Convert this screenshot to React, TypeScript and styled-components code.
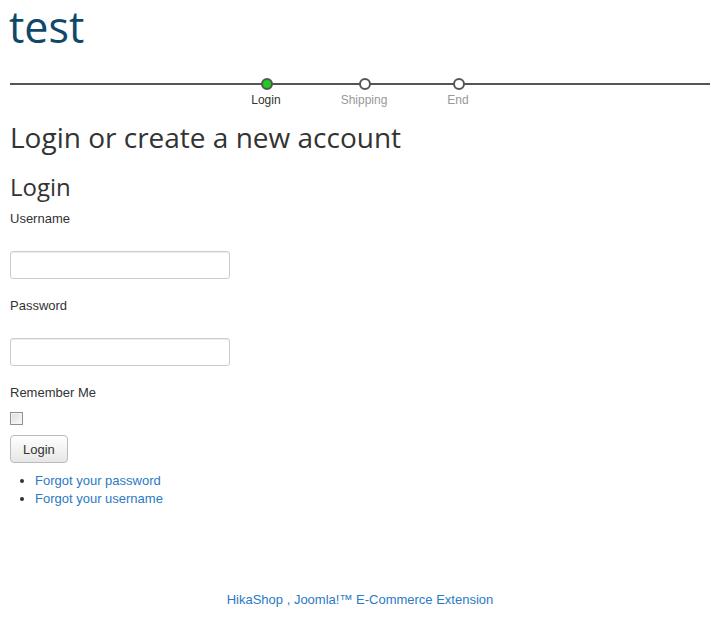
import React from "react";
import styled, { createGlobalStyle } from "styled-components";

const GlobalStyle = createGlobalStyle`
  body {
    margin: 0;
    background: #fff;
    font-family: "Liberation Sans", Arial, sans-serif;
    font-size: 13px;
    color: #333;
  }
`;

const Page = styled.div`
  padding: 0 10px;
  display: flex;
  flex-flow: column nowrap;
`;

const SiteTitle = styled.h1`
  font-family: "Open Sans", sans-serif;
  font-weight: 400;
  font-size: 43px;
  line-height: 46px;
  color: #0f4868;
  margin: 4px 0 0 -1px;
`;

const Steps = styled.div`
  margin-top: 33px;
  border-top: 2px solid #555;
  display: flex;
  justify-content: center;
  gap: 60px;
`;

const Step = styled.div`
  display: flex;
  flex-flow: column nowrap;
  align-items: center;
  margin-top: -7px;
`;

const Dot = styled.span<{ $active?: boolean }>`
  width: 8px;
  height: 8px;
  border-radius: 50%;
  border: 2px solid #555;
  background: ${(p) => (p.$active ? "#1fcc1f" : "#fff")};
  margin-left: 2px;
`;

const StepLabel = styled.span<{ $active?: boolean }>`
  font-size: 12px;
  line-height: 14px;
  margin-top: 3px;
  color: ${(p) => (p.$active ? "#333" : "#999")};
`;

const Heading = styled.h2`
  font-family: "Open Sans", sans-serif;
  font-weight: 400;
  font-size: 28px;
  line-height: 34px;
  margin: 13px 0 0;
  color: #333;
`;

const SubHeading = styled.h3`
  font-family: "Open Sans", sans-serif;
  font-weight: 400;
  font-size: 24px;
  line-height: 30px;
  margin: 18px 0 0;
  color: #333;
`;

const Form = styled.form`
  display: flex;
  flex-flow: column nowrap;
  align-items: flex-start;
`;

const Field = styled.div`
  display: flex;
  flex-flow: column nowrap;
  margin-bottom: 18px;
`;

const Label = styled.label<{ $first?: boolean }>`
  font-size: 13px;
  line-height: 18px;
  margin-top: ${(p) => (p.$first ? "8px" : "0")};
  color: #333;
`;

const Input = styled.input`
  box-sizing: border-box;
  width: 220px;
  height: 28px;
  margin: 23px 0 0;
  border: 1px solid #ccc;
  border-radius: 3px;
  box-shadow: inset 0 1px 1px rgba(0, 0, 0, 0.075);
  padding: 4px 6px;
`;

const Check = styled.input`
  appearance: none;
  box-sizing: border-box;
  margin: 10px 0 0;
  width: 13px;
  height: 13px;
  border: 1px solid #8e8f8f;
  background: linear-gradient(135deg, #dcdcdc, #fbfbfb);
  box-shadow: inset 0 0 0 1px #f4f4f4;
`;

const Button = styled.button`
  margin-top: 10px;
  height: 28px;
  padding: 0 12px;
  font-family: "Liberation Sans", Arial, sans-serif;
  font-size: 13px;
  color: #333;
  background: linear-gradient(#fff, #e6e6e6);
  border: 1px solid #bbb;
  border-radius: 4px;
`;

const Links = styled.ul`
  margin: 9px 0 0;
  padding-left: 25px;
  font-size: 13px;
  line-height: 18px;
`;

const Link = styled.a`
  color: #2a7ac4;
  text-decoration: none;
`;

const Footer = styled.div`
  text-align: center;
  margin-top: 83px;
  font-size: 13px;
  line-height: 18px;
`;

const steps = ["Login", "Shipping", "End"];

export default function App() {
  return (
    <>
      <GlobalStyle />
      <Page>
        <SiteTitle>test</SiteTitle>
        <Steps>
          {steps.map((s, i) => (
            <Step key={s}>
              <Dot $active={i === 0} />
              <StepLabel $active={i === 0}>{s}</StepLabel>
            </Step>
          ))}
        </Steps>
        <Heading>Login or create a new account</Heading>
        <SubHeading>Login</SubHeading>
        <Form onSubmit={(e) => e.preventDefault()}>
          <Field>
            <Label $first>Username</Label>
            <Input type="text" />
          </Field>
          <Field>
            <Label>Password</Label>
            <Input type="password" />
          </Field>
          <Label>Remember Me</Label>
          <Check type="checkbox" />
          <Button type="submit">Login</Button>
        </Form>
        <Links>
          <li>
            <Link href="#">Forgot your password</Link>
          </li>
          <li>
            <Link href="#">Forgot your username</Link>
          </li>
        </Links>
        <Footer>
          <Link href="#">HikaShop , Joomla!™ E-Commerce Extension</Link>
        </Footer>
      </Page>
    </>
  );
}
